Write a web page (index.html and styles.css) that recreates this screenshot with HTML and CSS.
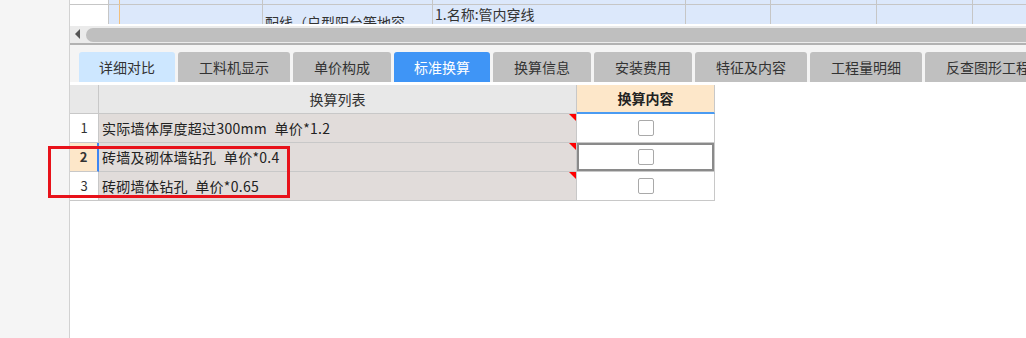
FILE: index.html
```html
<!DOCTYPE html>
<html lang="zh-CN">
<head>
    <meta charset="UTF-8">
    <meta name="viewport" content="width=device-width, initial-scale=1.0">
    <title>标准换算</title>
    <link rel="stylesheet" href="styles.css">
</head>
<body>

    <div class="side"></div>

    <div class="main">
        <div class="top_table">
            <div class="top_row top_row_cut">
                <div class="tcell tcell_head"></div>
                <div class="tcell tcell_mark"></div>
                <div class="tcell"></div>
                <div class="tcell"></div>
                <div class="tcell"></div>
                <div class="tcell"></div>
                <div class="tcell"></div>
                <div class="tcell"></div>
                <div class="tcell"></div>
            </div>
            <div class="top_row">
                <div class="tcell tcell_head"></div>
                <div class="tcell tcell_mark"></div>
                <div class="tcell"></div>
                <div class="tcell tcell_low">配线（户型阳台等地容</div>
                <div class="tcell tcell_text">1.名称:管内穿线</div>
                <div class="tcell"></div>
                <div class="tcell"></div>
                <div class="tcell"></div>
                <div class="tcell"></div>
            </div>
        </div>

        <div class="scrollbar">
            <div class="scroll_arrow"></div>
            <div class="scroll_thumb"></div>
        </div>

        <div class="tabbar">
            <div class="tab tab_light">详细对比</div>
            <div class="tab">工料机显示</div>
            <div class="tab">单价构成</div>
            <div class="tab tab_active">标准换算</div>
            <div class="tab">换算信息</div>
            <div class="tab">安装费用</div>
            <div class="tab">特征及内容</div>
            <div class="tab">工程量明细</div>
            <div class="tab tab_last">反查图形工程量</div>
        </div>

        <div class="grid">
            <div class="gcell ghead"></div>
            <div class="gcell ghead">换算列表</div>
            <div class="gcell ghead ghead_sel">换算内容</div>

            <div class="gcell gnum">1</div>
            <div class="gcell gtext">实际墙体厚度超过300mm 单价*1.2</div>
            <div class="gcell gcheck"><span class="box"></span></div>

            <div class="gcell gnum gnum_sel">2</div>
            <div class="gcell gtext">砖墙及砌体墙钻孔 单价*0.4</div>
            <div class="gcell gcheck gcheck_sel"><span class="box"></span></div>

            <div class="gcell gnum">3</div>
            <div class="gcell gtext">砖砌墙体钻孔 单价*0.65</div>
            <div class="gcell gcheck"><span class="box"></span></div>
        </div>
    </div>

    <div class="mark_box"></div>

</body>
</html>
```

FILE: styles.css
```css
*,*::after,*::before{
    box-sizing: border-box;
    margin: 0;
    padding: 0;
}

body{
    position: relative;
    display: flex;
    height: 338px;
    overflow: hidden;
    font-family: "Noto Sans CJK SC", "Noto Sans", sans-serif;
    font-size: 14px;
    color: #333;
    background-color: white;
}

.side{
    width: 70px;
    flex-shrink: 0;
    background-color: #f5f5f5;
    border-right: 1px solid #d2d2d2;
}

.main{
    flex: 1;
    display: flex;
    flex-direction: column;
    background-color: white;
}

/* upper table, only its last rows show */
.top_table{
    height: 24px;
    overflow: hidden;
}

.top_row{
    display: grid;
    grid-template-columns: 39px 11px 143px 170px 253px 85px 106px 96px 1fr;
    height: 20px;
}

.top_row_cut{
    height: 5px;
    border-bottom: 1px solid #c6c6c6;
}

.tcell{
    background-color: #dce8fb;
    border-right: 1px solid #c6c6c6;
    overflow: hidden;
    white-space: nowrap;
}

.tcell_head{
    background-color: white;
}

.tcell_mark{
    border-right-color: #f2bf7c;
}

.tcell_text{
    padding-left: 2px;
    line-height: 19px;
}

.tcell_low{
    padding: 8px 0 0 2px;
    line-height: 19px;
}

.scrollbar{
    display: flex;
    align-items: center;
    height: 19px;
    margin-top: 2px;
    background-color: #ebebeb;
    border-bottom: 2px solid #b2b2b2;
}

.scroll_arrow{
    width: 16px;
    height: 100%;
    position: relative;
}

.scroll_arrow::after{
    content: "";
    position: absolute;
    left: 5px;
    top: 3px;
    border-right: 5px solid #555;
    border-top: 5px solid transparent;
    border-bottom: 5px solid transparent;
}

.scroll_thumb{
    flex: 1;
    height: 14px;
    background-color: #bfbfbf;
    border-radius: 7px 0 0 7px;
}

.tabbar{
    display: flex;
    gap: 3px;
    padding: 7px 0 0 9px;
    background-color: #f4f4f4;
    overflow: hidden;
}

.tab{
    flex-shrink: 0;
    height: 30px;
    padding: 0 21px;
    line-height: 30px;
    background-color: #c0c0c0;
    border-radius: 3px 3px 0 0;
    color: #333;
    white-space: nowrap;
}

.tab_light{
    padding: 0 20px;
    background-color: #cde7ff;
}

.tab_active{
    padding: 0 20px;
    background-color: #3f95f6;
    color: white;
}

.grid{
    display: grid;
    grid-template-columns: 29px 478px 138px;
    grid-auto-rows: 29px;
    margin-top: 3px;
}

.gcell{
    position: relative;
    border-right: 1px solid #c8c8c8;
    border-bottom: 1px solid #c8c8c8;
    line-height: 28px;
    white-space: nowrap;
}

.ghead{
    background-color: #e8e8e8;
    text-align: center;
}

.ghead_sel{
    background-color: #fde7c9;
    font-weight: bold;
    color: #222;
    border-bottom: 2px solid #4a9bf2;
    line-height: 27px;
}

.gnum{
    background-color: white;
    text-align: center;
    font-size: 13px;
}

.gnum_sel{
    background-color: #fde7c9;
    font-weight: bold;
    border-right: 2px solid #3d85f2;
}

.gtext{
    padding-left: 3px;
    background-color: #e1dcda;
    color: #222;
    letter-spacing: 0.3px;
    word-spacing: 4px;
}

.gtext::after{
    content: "";
    position: absolute;
    top: 0;
    right: 0;
    border-top: 7px solid #f00;
    border-left: 7px solid transparent;
}

.gcheck{
    display: flex;
    align-items: center;
    justify-content: center;
    background-color: white;
}

.gcheck_sel{
    box-shadow: inset 0 0 0 2px #8a8a8a;
}

.box{
    width: 16px;
    height: 16px;
    border: 1px solid #a9a9a9;
    border-radius: 2px;
    background-color: white;
}

/* red annotation drawn over the grid */
.mark_box{
    position: absolute;
    left: 48px;
    top: 146px;
    width: 242px;
    height: 52px;
    border: 3px solid #e8121a;
}
```
